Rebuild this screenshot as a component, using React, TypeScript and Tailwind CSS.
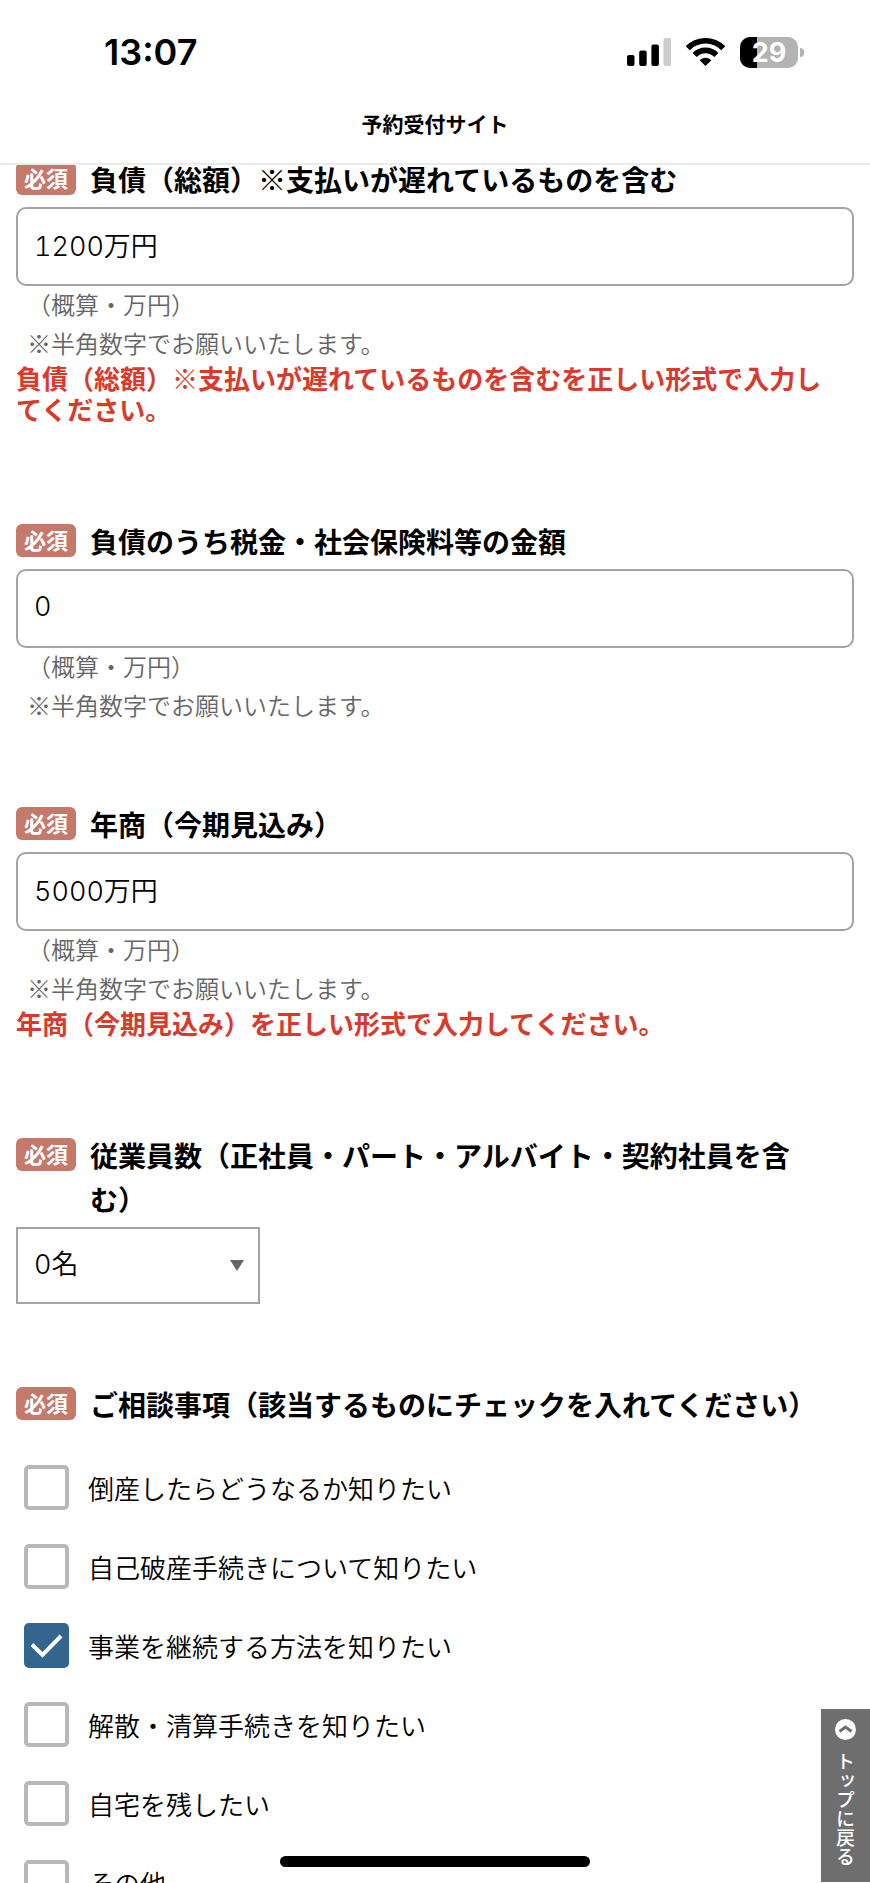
import { useState } from "react";
import type { ReactNode } from "react";

const initialTopics = [
  { label: "倒産したらどうなるか知りたい", checked: false },
  { label: "自己破産手続きについて知りたい", checked: false },
  { label: "事業を継続する方法を知りたい", checked: true },
  { label: "解散・清算手続きを知りたい", checked: false },
  { label: "自宅を残したい", checked: false },
  { label: "その他", checked: false },
];

export default function App() {
  const [debt, setDebt] = useState("1200万円");
  const [tax, setTax] = useState("0");
  const [sales, setSales] = useState("5000万円");
  const [employees, setEmployees] = useState("0名");
  const [topics, setTopics] = useState(initialTopics);

  function handleToggle(index: number) {
    setTopics((prev) =>
      prev.map((topic, i) => (i === index ? { ...topic, checked: !topic.checked } : topic))
    );
  }

  return (
    <div className="flex h-screen flex-col bg-white font-['Noto_Sans_CJK_JP',sans-serif] text-black">
      <Header />
      <main className="min-h-0 flex-1 overflow-y-auto px-4 [scrollbar-width:none]">
        {/* page is scrolled a little, so the first heading sits under the header */}
        <form className="-mt-2 flex flex-col gap-[76px]" onSubmit={(e) => e.preventDefault()}>
          <AmountField
            id="debt"
            label="負債（総額）※支払いが遅れているものを含む"
            value={debt}
            onChange={setDebt}
            error="負債（総額）※支払いが遅れているものを含むを正しい形式で入力してください。"
          />
          <AmountField id="tax" label="負債のうち税金・社会保険料等の金額" value={tax} onChange={setTax} />
          <AmountField
            id="sales"
            label="年商（今期見込み）"
            value={sales}
            onChange={setSales}
            error="年商（今期見込み）を正しい形式で入力してください。"
          />
          <div className="pb-0.5">
            <Heading>
              <label htmlFor="employees">従業員数（正社員・パート・アルバイト・契約社員を含む）</label>
            </Heading>
            <div className="grid w-[244px] items-center">
              <select
                id="employees"
                className="col-start-1 row-start-1 h-[77px] w-full appearance-none border-2 border-[#a3a3a3] bg-white px-4 font-['Inter','Noto_Sans_CJK_JP',sans-serif] text-[27px] font-[350] tabular-nums"
                value={employees}
                onChange={(e) => setEmployees(e.target.value)}
              >
                <option>0名</option>
                <option>1〜5名</option>
                <option>6〜10名</option>
                <option>11名以上</option>
              </select>
              <svg className="pointer-events-none col-start-1 row-start-1 mr-4 justify-self-end" width="14" height="11" viewBox="0 0 14 11" aria-hidden="true">
                <path d="M0 0h14L7 11z" fill="#666" />
              </svg>
            </div>
          </div>
          <fieldset>
            <legend className="w-full">
              <Heading>ご相談事項（該当するものにチェックを入れてください）</Heading>
            </legend>
            <div className="flex flex-col gap-[34px] px-2 pt-[33px] pb-10">
              {topics.map((topic, index) => (
                <TopicCheckbox
                  key={topic.label}
                  label={topic.label}
                  checked={topic.checked}
                  onChange={() => handleToggle(index)}
                />
              ))}
            </div>
          </fieldset>
        </form>
      </main>
      <a
        href="#top"
        className="fixed right-0 bottom-px flex w-[49px] flex-col items-center gap-3 bg-[#6e6e6e] pt-2.5 pb-4 text-[19px] leading-none font-medium text-white"
      >
        <svg width="21" height="21" viewBox="0 0 21 21" aria-hidden="true">
          <circle cx="10.5" cy="10.5" r="10.5" fill="#fff" />
          <path d="M4.5 12.5l6-4.5 6 4.5" fill="none" stroke="#6e6e6e" strokeWidth="3" />
        </svg>
        <span className="[writing-mode:vertical-rl]">トップに戻る</span>
      </a>
      <div className="fixed bottom-4 left-1/2 h-[11px] w-[310px] -translate-x-1/2 rounded-full bg-black" />
    </div>
  );
}

const Header = () => {
  return (
    <header id="top" className="z-10 shrink-0 border-b-2 border-[#ebebeb] bg-white">
      <div className="flex items-end justify-between pt-[30px] pr-[66px] pl-[104px] font-['Inter',sans-serif]">
        <time className="text-[36px] leading-[44px] font-semibold">13:07</time>
        <div className="flex h-[44px] items-center gap-[15px]">
          <SignalIcon />
          <WifiIcon />
          <Battery level={29} />
        </div>
      </div>
      <h1 className="pt-8 pb-[23px] text-center text-[21px] leading-[34px] font-bold">予約受付サイト</h1>
    </header>
  );
};

const SignalIcon = () => (
  <svg width="44" height="28" viewBox="0 0 44 28" aria-hidden="true">
    <rect x="0" y="17" width="7.5" height="11" rx="2" />
    <rect x="12.2" y="12.5" width="7.5" height="15.5" rx="2" />
    <rect x="24.4" y="6.5" width="7.5" height="21.5" rx="2" />
    <rect x="36.5" y="0" width="7.5" height="28" rx="2" fill="#ccc" />
  </svg>
);

const WifiIcon = () => (
  <svg width="39" height="28" viewBox="0 0 39 28" aria-hidden="true">
    <g fill="none" stroke="#000" strokeWidth="5.6">
      <path d="M1.8 10.2C11.5 .3 27.5 .3 37.2 10.2" />
      <path d="M8.6 17C14.6 10.8 24.4 10.8 30.4 17" />
    </g>
    <path d="M13.6 22.2c3.3-3.4 8.5-3.4 11.8 0L19.5 28z" />
  </svg>
);

const Battery = ({ level }: { level: number }) => {
  return (
    <div className="flex items-center gap-[2px]">
      <div className="relative flex h-[31px] w-[58px] items-center justify-center overflow-hidden rounded-[10px] bg-[#b3b3b3]">
        <div className="absolute inset-y-0 left-0 bg-black" style={{ width: `${level}%` }} />
        <span className="relative text-[27px] leading-none font-bold text-white">{level}</span>
      </div>
      <div className="h-[9px] w-1 rounded-r-full bg-[#b3b3b3]" />
    </div>
  );
};

const Heading = ({ children }: { children: ReactNode }) => {
  return (
    <div className="mb-1.5 flex items-start gap-3.5 pr-7 text-[28px] leading-[44px] font-bold">
      <span className="mt-[5px] shrink-0 rounded-md bg-[#c5796b] px-2 pb-0.5 text-[22px] leading-[31px] text-white">
        必須
      </span>
      <div>{children}</div>
    </div>
  );
};

type AmountFieldProps = {
  id: string;
  label: string;
  value: string;
  onChange: (value: string) => void;
  error?: string;
};

const AmountField = ({ id, label, value, onChange, error }: AmountFieldProps) => {
  return (
    <div className="pb-0.5">
      <Heading>
        <label htmlFor={id}>{label}</label>
      </Heading>
      <input
        id={id}
        type="text"
        className="block h-[79px] w-full rounded-[10px] border-2 border-[#a3a3a3] bg-white px-4 pb-1 font-['Inter','Noto_Sans_CJK_JP',sans-serif] text-[27px] font-[350] tabular-nums"
        value={value}
        onChange={(e) => onChange(e.target.value)}
      />
      <p className="-mt-0.5 pl-[11px] text-[24px] leading-[39px] font-[350] text-[#666]">
        （概算・万円）
        <br />
        ※半角数字でお願いいたします。
      </p>
      {error && <p className="pr-3 pb-[17px] text-[26px] leading-[31px] font-bold text-[#d93a2b]">{error}</p>}
    </div>
  );
};

type TopicCheckboxProps = {
  label: string;
  checked: boolean;
  onChange: () => void;
};

const TopicCheckbox = ({ label, checked, onChange }: TopicCheckboxProps) => {
  return (
    <label className="flex items-center gap-[19px] text-[26px] leading-[45px] font-[350]">
      <span className="grid">
        <input
          type="checkbox"
          className="col-start-1 row-start-1 size-[45px] appearance-none rounded-[5px] border-4 border-[#b8b8b8] bg-white checked:border-[#33658f] checked:bg-[#33658f]"
          checked={checked}
          onChange={onChange}
        />
        {checked && (
          <svg className="pointer-events-none col-start-1 row-start-1" width="45" height="45" viewBox="0 0 45 45" aria-hidden="true">
            <path d="M8 21.5l10.5 10.5L37 13" fill="none" stroke="#fff" strokeWidth="4" />
          </svg>
        )}
      </span>
      {label}
    </label>
  );
};
